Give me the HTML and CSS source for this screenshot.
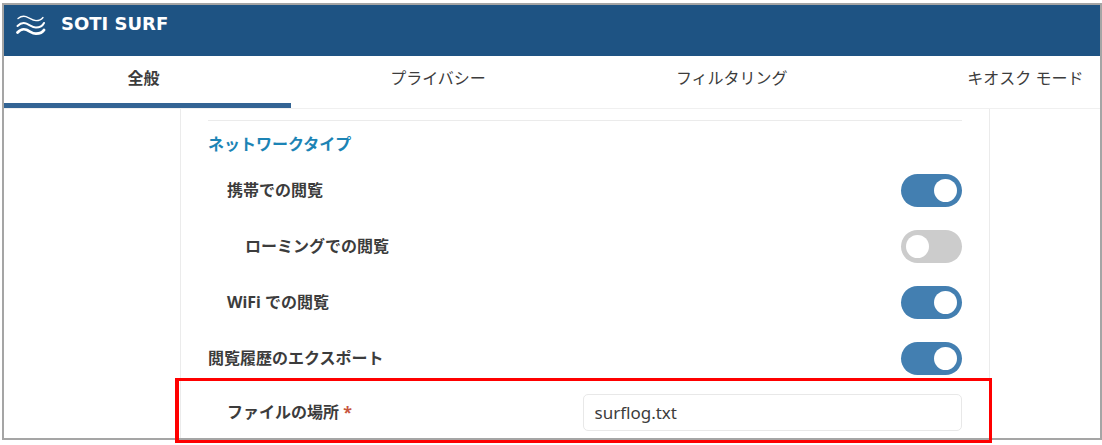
FILE: index.html
```html
<!DOCTYPE html>
<html lang="ja">
<head>
    <meta charset="UTF-8">
    <meta name="viewport" content="width=device-width, initial-scale=1.0">
    <title>SOTI SURF</title>
    <link rel="stylesheet" href="styles.css">
</head>
<body>

<div class="window">
    <header class="header">
        <svg class="logo" viewBox="0 0 30 22" aria-hidden="true">
            <path d="M2 4.5 C4.5 2.5 7.5 1.8 10 2.6 C13.5 3.7 16 6.5 20 6.6 C23 6.6 25.5 5.5 27 3.5" stroke-width="1.3" />
            <path d="M1.5 12 C4 9.5 7.5 8.4 10.5 9.6 C14 11 16.5 13.6 20 13.5 C23.5 13.4 26.5 12 28 9" stroke-width="2" />
            <path d="M1.5 18.5 C4 15.8 7.5 14.6 10.5 15.8 C14 17.2 16.5 19.8 20 19.7 C23.5 19.6 26.5 18.5 28 16" stroke-width="2.7" />
        </svg>
        <h1 class="title">SOTI SURF</h1>
    </header>

    <nav class="tabs">
        <a href="#general" class="tab active">全般</a>
        <a href="#privacy" class="tab">プライバシー</a>
        <a href="#filtering" class="tab">フィルタリング</a>
        <a href="#kiosk" class="tab">キオスク モード</a>
    </nav>

    <main class="panel" id="general">
        <h2 class="section-title">ネットワークタイプ</h2>

        <div class="row indent">
            <label for="cellular">携帯での閲覧</label>
            <input type="checkbox" class="switch" id="cellular" checked>
        </div>
        <div class="row indent-more">
            <label for="roaming">ローミングでの閲覧</label>
            <input type="checkbox" class="switch" id="roaming">
        </div>
        <div class="row indent">
            <label for="wifi">WiFi での閲覧</label>
            <input type="checkbox" class="switch" id="wifi" checked>
        </div>
        <div class="row">
            <label for="export">閲覧履歴のエクスポート</label>
            <input type="checkbox" class="switch" id="export" checked>
        </div>
        <div class="row indent file-row">
            <label for="location">ファイルの場所 <span class="required">*</span></label>
            <input type="text" class="text-input" id="location" value="surflog.txt">
            <div class="highlight"></div>
        </div>
    </main>
</div>

</body>
</html>
```
FILE: styles.css
```css
* {
    box-sizing: border-box;
}
body {
    margin: 0;
    padding: 3px 0 5px 2px;
    font-family: "Noto Sans", "Noto Sans CJK JP", sans-serif;
    font-size: 16px;
    line-height: 24px;
    color: #3c3c3c;
    background-color: #fff;
}
.window {
    border: 2px solid #a5a5a5;
}
.header {
    display: flex;
    align-items: flex-start;
    gap: 15px;
    height: 51px;
    padding: 8px 12px;
    background-color: #1e5383;
}
.logo {
    width: 30px;
    height: 22px;
    margin-top: 1px;
    fill: none;
    stroke: #fff;
    stroke-linecap: round;
}
.title {
    margin: 0;
    font-family: "DejaVu Sans", sans-serif;
    font-size: 18px;
    line-height: 22px;
    color: #fff;
}

/* the tab strip is wider than the window and gets clipped */
.tabs {
    display: grid;
    grid-template-columns: 26.2% repeat(3, 26.8%);
    height: 53px;
    overflow: hidden;
    border-bottom: 1px solid #f0f0f0;
}
.tab {
    padding-top: 10px;
    text-align: center;
    color: #3c3c3c;
    text-decoration: none;
    border-bottom: 5px solid transparent;
}
.tab.active {
    padding-right: 8px;
    font-weight: bold;
    border-bottom-color: #336494;
}

.panel {
    margin: 0 110px 0 176px;
    padding: 11px 27px 0;
    border: 1px solid #ebebeb;
    border-width: 0 1px;
}
.section-title {
    margin: 0;
    padding: 11px 0 6px;
    font-size: 16px;
    color: #1c84b5;
    border-top: 1px solid #ebebeb;
}
.row {
    display: flex;
    align-items: center;
    justify-content: space-between;
    min-height: 56px;
    font-weight: bold;
}
.indent {
    padding-left: 19px;
}
.indent-more {
    padding-left: 37px;
}

/* toggle switch */
.switch {
    appearance: none;
    display: flex;
    align-items: center;
    width: 61px;
    height: 33px;
    margin: 0;
    padding: 0 5px;
    border-radius: 17px;
    background-color: #ccc;
    cursor: pointer;
}
.switch::before {
    content: "";
    width: 23px;
    height: 23px;
    border-radius: 50%;
    background-color: #fff;
}
.switch:checked {
    justify-content: flex-end;
    background-color: #437fb1;
}

.file-row {
    position: relative;
    min-height: 52px;
}
.required {
    color: #c8553d;
}
.text-input {
    width: 51.5%;
    height: 37px;
    padding: 0 10px;
    font: inherit;
    font-size: 17px;
    font-weight: normal;
    color: #3c3c3c;
    background-color: #fff;
    border: 1px solid #e8e8e8;
    border-radius: 5px;
}
.highlight {
    position: absolute;
    inset: -8px -30px -5px -33px;
    border: 3px solid #f00;
    border-left-width: 4px;
    pointer-events: none;
}
```
